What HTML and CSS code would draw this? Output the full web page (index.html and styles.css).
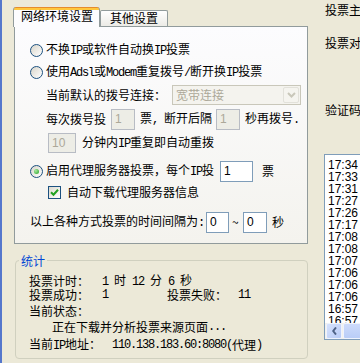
FILE: index.html
```html
<!DOCTYPE html>
<html lang="zh-CN">
    <head>
        <meta charset="UTF-8" />
        <title>网络环境设置</title>
        <link rel="stylesheet" href="styles.css">
    </head>

    <body>
        <section class="left">
            <div class="tabs">
                <div class="tab active">网络环境设置</div>
                <div class="tab">其他设置</div>
            </div>
            <div class="panel">
                <div class="row r1">
                    <span class="radio"></span>
                    <span>不换<span class="en">IP</span>或软件自动换<span class="en">IP</span>投票</span>
                </div>
                <div class="row r2">
                    <span class="radio"></span>
                    <span>使用<span class="en">Adsl</span>或<span class="en">Modem</span>重复拨号<span class="en">/</span>断开换<span class="en">IP</span>投票</span>
                </div>
                <div class="row r3">
                    <span>当前默认的拨号连接：</span>
                    <div class="select">
                        <span class="select-text">宽带连接</span>
                        <span class="select-btn">
                            <svg width="9" height="6" viewBox="0 0 9 6"><path d="M1 1 L4.5 4.5 L8 1" stroke="#c9c7ba" stroke-width="2" fill="none"/></svg>
                        </span>
                    </div>
                </div>
                <div class="row r4">
                    <span>每次拨号投</span>
                    <span class="box dis w24 gap-a">1</span>
                    <span>票<span class="en">, </span>断开后隔</span>
                    <span class="box dis w24 gap-b">1</span>
                    <span>秒再拨号<span class="en">.</span></span>
                </div>
                <div class="row r5">
                    <span class="box dis w28 gap-c">10</span>
                    <span>分钟内<span class="en">IP</span>重复即自动重拨</span>
                </div>
                <div class="row r6">
                    <span class="radio on"></span>
                    <span>启用代理服务器投票，每个<span class="en">IP</span>投</span>
                    <span class="box w33 gap-d">1</span>
                    <span>票</span>
                </div>
                <div class="row r7">
                    <span class="check">
                        <svg width="9" height="9" viewBox="0 0 9 9"><path d="M1 4.2 L3.5 6.7 L8 1.8" stroke="#21a121" stroke-width="2" fill="none"/></svg>
                    </span>
                    <span>自动下载代理服务器信息</span>
                </div>
                <div class="row r8">
                    <span>以上各种方式投票的时间间隔为<span class="en">:</span></span>
                    <span class="box w23 gap-e">0</span>
                    <span class="tilde">~</span>
                    <span class="box w24 gap-f">0</span>
                    <span>秒</span>
                </div>
            </div>

            <fieldset class="stats">
                <legend>统计</legend>
                <div class="stats-body">
                    <div class="srow s1">
                        <span class="lab">投票计时：</span>
                        <span><span class="en">1 </span>时<span class="en"> 12 </span>分<span class="en"> 6 </span>秒</span>
                    </div>
                    <div class="srow s2">
                        <span class="lab">投票成功：</span>
                        <span class="val en">1</span>
                        <span class="lab2">投票失败：</span>
                        <span class="en">11</span>
                    </div>
                    <div class="srow s3">当前状态：</div>
                    <div class="srow s4">正在下载并分析投票来源页面<span class="en">...</span></div>
                    <div class="srow s5">
                        <span class="lab3">当前<span class="en">IP</span>地址：</span>
                        <span class="en">110.138.183.60:8080(</span>代理<span class="en">)</span>
                    </div>
                </div>
            </fieldset>
        </section>

        <section class="right">
            <div class="label l1">投票主题：</div>
            <div class="label l2">投票对象：</div>
            <div class="label l3">验证码：</div>
            <div class="list">
                <div class="rows">
                    <div>17:34</div>
                    <div>17:33</div>
                    <div>17:31</div>
                    <div>17:27</div>
                    <div>17:26</div>
                    <div>17:17</div>
                    <div>17:08</div>
                    <div>17:08</div>
                    <div>17:07</div>
                    <div>17:06</div>
                    <div>17:06</div>
                    <div>17:06</div>
                    <div>16:57</div>
                    <div>16:57</div>
                    <div>16:52</div>
                </div>
                <div class="hscroll">
                    <span class="sbtn">
                        <svg width="5" height="8" viewBox="0 0 5 8"><path d="M4 0.5 L1.2 4 L4 7.5" stroke="#4d6185" stroke-width="2" fill="none"/></svg>
                    </span>
                    <span class="thumb"></span>
                </div>
            </div>
        </section>
    </body>
</html>
```

FILE: styles.css
```css
* {
    margin: 0;
    padding: 0;
    box-sizing: border-box;
}

body {
    display: flex;
    height: 363px;
    overflow: hidden;
    border-left: 2px solid #5577cc;
    background: #ece9d8;
    color: #000;
    font-family: "Noto Sans CJK SC", sans-serif;
    font-size: 12px;
    line-height: 14px;
}

.en {
    font-family: "Liberation Mono", monospace;
    letter-spacing: -1.2px;
    white-space: pre;
}

/* 左侧：选项卡 + 统计 */
.left {
    width: 294px;
    margin-left: 12px;
    flex-shrink: 0;
}

.tabs {
    display: flex;
    align-items: flex-end;
    height: 20px;
    margin-top: 7px;
    margin-left: -1px;
    margin-bottom: -1px;
}

.tab {
    height: 16px;
    width: 68px;
    margin-bottom: 1px;
    border: 1px solid #919b9c;
    border-bottom: none;
    border-radius: 2px 2px 0 0;
    background: linear-gradient(#ffffff, #ecebe6);
    text-align: center;
    line-height: 14px;
}

.tab.active {
    position: relative;
    z-index: 1;
    width: 87px;
    height: 20px;
    margin-bottom: 0;
    padding: 2px 0 0 7px;
    border-top: none;
    border-radius: 3px 3px 0 0;
    background: linear-gradient(#e68b2c 0, #e68b2c 1px, #ffc73c 1px, #ffc73c 3px, #fcfcfe 3px);
    text-align: left;
}

.panel {
    width: 294px;
    height: 218px;
    padding-top: 12px;
    border: 1px solid #919b9c;
    background: linear-gradient(#fcfcfe, #f4f3ee);
}

.row {
    display: flex;
    align-items: center;
    white-space: nowrap;
}

.r1, .r2 {
    height: 22px;
    padding-left: 15px;
}

.r3, .r4 {
    height: 24px;
    padding-left: 31px;
}

.r5 {
    height: 24px;
    padding-left: 33px;
}

.r6 {
    height: 22px;
    margin-top: 5px;
    padding-left: 15px;
}

.r7 {
    height: 20px;
    padding-left: 33px;
}

.r8 {
    height: 22px;
    margin-top: 9px;
    padding-left: 15px;
}

.radio {
    display: flex;
    align-items: center;
    justify-content: center;
    width: 13px;
    height: 13px;
    margin-right: 3px;
    border: 1px solid #1c5180;
    border-radius: 50%;
    background: linear-gradient(135deg, #d8d5ca, #ffffff);
}

.radio.on::after {
    content: "";
    width: 5px;
    height: 5px;
    border-radius: 50%;
    background: radial-gradient(circle at 35% 35%, #a8e8a0, #21a121);
}

.check {
    display: flex;
    align-items: center;
    justify-content: center;
    width: 13px;
    height: 13px;
    margin-right: 6px;
    border: 1px solid #1c5180;
    background: linear-gradient(135deg, #dcd9ce, #ffffff);
}

.select {
    display: flex;
    align-items: center;
    justify-content: space-between;
    width: 129px;
    height: 20px;
    margin-left: 6px;
    padding: 0 1px 0 3px;
    border: 1px solid #c9c7ba;
    background: #f4f3ee;
}

.select-text {
    color: #aca899;
}

.select-btn {
    display: flex;
    align-items: center;
    justify-content: center;
    width: 16px;
    height: 16px;
    border: 1px solid #e2e1da;
    border-radius: 2px;
    background: #f5f4ef;
}

.box {
    height: 21px;
    padding-left: 3px;
    border: 1px solid #7f9db9;
    background: #fff;
    font-family: "Liberation Sans", sans-serif;
    line-height: 19px;
}

.box.dis {
    border-color: #b8bcc4;
    background: #edede6;
    color: #aca899;
}

.w23 { width: 23px; }
.w24 { width: 24px; }
.w28 { width: 28px; height: 20px; }
.w33 { width: 33px; }

.gap-a { margin: 0 5px; }
.gap-b { margin: 0 5px 0 4px; }
.gap-c { margin-right: 6px; }
.gap-d { margin: 0 9px 0 6px; }
.gap-e { margin-left: 2px; }
.gap-f { margin-right: 5px; }

.tilde {
    width: 14px;
    padding-left: 3px;
}

.stats {
    width: 293px;
    height: 107px;
    margin: 8px 0 0 1px;
    padding: 5px 0 4px 0;
    border: 1px solid #d0d0bf;
    border-radius: 4px;
}

.stats legend {
    margin-left: 3px;
    padding: 0 2px;
    color: #0046d5;
    line-height: 17px;
}

.stats-body {
    padding-left: 13px;
}

.srow {
    display: flex;
    align-items: center;
    white-space: nowrap;
}

.s1, .s2 { height: 14px; }
.s3 { height: 17px; }
.s4 { height: 16px; padding-left: 23px; }
.s5 { height: 19px; }

.lab { width: 73px; }
.val { width: 65px; }
.lab2 { width: 71px; }
.lab3 { width: 83px; }

/* 右侧 */
.right {
    flex: 1;
    min-width: 0;
    overflow: hidden;
    padding-left: 16px;
    white-space: nowrap;
}

.label {
    padding-left: 1px;
    line-height: 16px;
}

.l1 { margin-top: 2px; }
.l2 { margin-top: 17px; }
.l3 { margin-top: 51px; }

.list {
    display: flex;
    flex-direction: column;
    width: 80px;
    height: 186px;
    margin-top: 36px;
    border: 1px solid #7f9db9;
    background: #fff;
}

.rows {
    flex: 1;
    overflow: hidden;
    padding: 4px 0 0 3px;
    font-family: "Liberation Sans", sans-serif;
    line-height: 12px;
}

.hscroll {
    display: flex;
    height: 16px;
    padding-left: 1px;
    background: #f3f1ec;
}

.sbtn {
    display: flex;
    align-items: center;
    justify-content: center;
    width: 16px;
    height: 16px;
    border: 1px solid #eef3fd;
    border-radius: 2px;
    background: linear-gradient(135deg, #d6e2fd, #b8cbf6);
}

.thumb {
    flex: 1;
    margin-left: 1px;
    border: 1px solid #eef3fd;
    border-radius: 2px;
    background: linear-gradient(#cddbfb, #b9cdf7);
}
```
